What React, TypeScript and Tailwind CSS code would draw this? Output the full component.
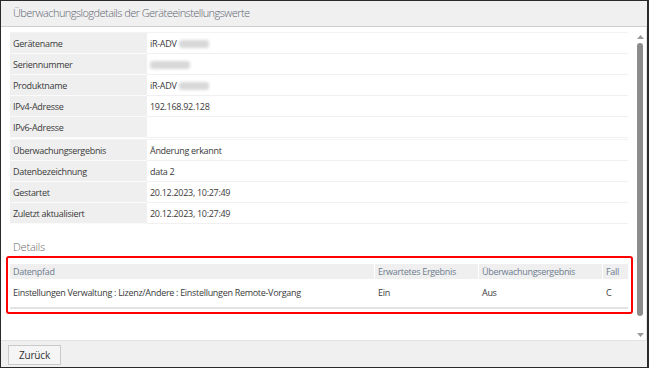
import React from "react";

const font = { fontFamily: '"Open Sans", "Noto Sans", sans-serif' };

function Blur({ w }: { w: number }) {
  return (
    <span
      className="inline-block h-[8px] rounded-[3px] bg-[#d8d8d8] blur-[1.5px] align-middle"
      style={{ width: w }}
    />
  );
}

type Row = { label: string; value: React.ReactNode };

const group1: Row[] = [
  { label: "Gerätename", value: <span className="flex items-center gap-[2px]">iR-ADV <Blur w={30} /></span> },
  { label: "Seriennummer", value: <Blur w={40} /> },
  { label: "Produktname", value: <span className="flex items-center gap-[2px]">iR-ADV <Blur w={30} /></span> },
  { label: "IPv4-Adresse", value: "192.168.92.128" },
  { label: "IPv6-Adresse", value: "" },
];

const group2: Row[] = [
  { label: "Überwachungsergebnis", value: "Änderung erkannt" },
  { label: "Datenbezeichnung", value: "data 2" },
  { label: "Gestartet", value: "20.12.2023, 10:27:49" },
  { label: "Zuletzt aktualisiert", value: "20.12.2023, 10:27:49" },
];

function InfoTable({ rows }: { rows: Row[] }) {
  return (
    <div className="flex flex-col border-t border-[#f3f3f3]">
      {rows.map((r) => (
        <div key={r.label} className="flex h-[21px]">
          <div className="w-[137px] bg-[#efefef] border-b border-[#fafafa] pl-[3px] pt-[1px] flex items-center text-[#3a3a3a]">
            {r.label}
          </div>
          <div className="flex-1 border-b border-[#f0f0f0] pl-[3px] pt-[1px] flex items-center text-[#3a3a3a]">
            {r.value}
          </div>
        </div>
      ))}
    </div>
  );
}

export default function App() {
  return (
    <div
      className="w-[649px] h-[368px] flex flex-col border-l border-t border-b border-r-2 border-[#2a2a2a] bg-white text-[9px] tracking-[-0.3px] overflow-hidden"
      style={font}
    >
      <div className="h-[26px] shrink-0 bg-[#f0f0f0] border-b border-[#cfcfcf] pl-[12px] flex items-center text-[11px] tracking-[-0.55px] font-light text-[#5f6670]">
        Überwachungslogdetails der Geräteeinstellungswerte
      </div>
      <div className="h-[313px] shrink-0 flex">
        <div className="flex-1 flex flex-col pt-[5px] pl-[9px] pr-[7px]">
          <InfoTable rows={group1} />
          <div className="h-[1px]" />
          <InfoTable rows={group2} />
          <div className="mt-[16px] pl-[3px] text-[11px] tracking-[-0.2px] font-light text-[#6a6a6a] leading-[14px]">
            Details
          </div>
          <div className="mt-[2px] -ml-[4px] -mr-[5px] border-2 border-[#ff0000] rounded-[3px] pt-[6px] pb-[3px] pl-[2px] pr-[3px]">
            <div className="flex h-[15px] bg-[#efefef] text-[#6e7c8e]">
              <div className="w-[365px] pl-[3px] flex items-center border-r border-white">Datenpfad</div>
              <div className="w-[104px] pl-[3px] flex items-center border-r border-white">Erwartetes Ergebnis</div>
              <div className="w-[124px] pl-[3px] flex items-center border-r border-white">Überwachungsergebnis</div>
              <div className="flex-1 pl-[3px] flex items-center">Fall</div>
            </div>
            <div className="flex h-[30px] border-b-2 border-[#e3e3e3] text-[#3a3a3a]">
              <div className="w-[365px] pl-[3px] flex items-center">
                Einstellungen Verwaltung : Lizenz/Andere : Einstellungen Remote-Vorgang
              </div>
              <div className="w-[104px] pl-[3px] flex items-center">Ein</div>
              <div className="w-[124px] pl-[3px] flex items-center">Aus</div>
              <div className="flex-1 pl-[3px] flex items-center">C</div>
            </div>
          </div>
        </div>
        <div className="w-[10px] mr-[1px] flex flex-col items-center pt-[7px] pb-[3px]">
          <svg width="7" height="4" viewBox="0 0 7 4" className="mt-[1px]">
            <path d="M0 4 L3.5 0 L7 4 Z" fill="#9a9a9a" />
          </svg>
          <div className="mt-[4px] w-[6px] h-[273px] rounded-full bg-[#8c8c8c]" />
          <div className="flex-1" />
          <svg width="7" height="4" viewBox="0 0 7 4">
            <path d="M0 0 L3.5 4 L7 0 Z" fill="#9a9a9a" />
          </svg>
        </div>
        <div className="w-[1px] bg-[#e4e4e4]" />
      </div>
      <div className="flex-1 bg-[#f0f0f0] border-t border-[#e2e2e2] pl-[7px] pt-[4px]">
        <button className="w-[53px] h-[20px] border border-[#c9c9c9] bg-[#f5f5f5] text-[10px] tracking-[-0.2px] text-[#333] flex items-center justify-center">
          Zurück
        </button>
      </div>
    </div>
  );
}
